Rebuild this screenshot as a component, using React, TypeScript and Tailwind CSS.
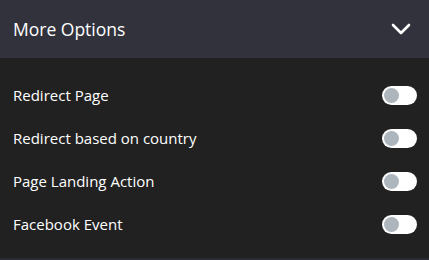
const options = [
  "Redirect Page",
  "Redirect based on country",
  "Page Landing Action",
  "Facebook Event",
];

function Toggle() {
  return (
    <div className="flex h-[19px] w-[35px] items-center rounded-full bg-white px-[2px]">
      <div className="h-[15px] w-[15px] rounded-full bg-[#adb5bd]" />
    </div>
  );
}

export default function App() {
  return (
    <div
      className="flex h-[260px] w-[429px] flex-col bg-[#212121] text-white"
      style={{ fontFamily: '"Open Sans", sans-serif' }}
    >
      <div className="flex h-[58px] shrink-0 items-center justify-between bg-[#31323b] pl-[13px] pr-[18px]">
        <h2 className="text-[17.5px]">More Options</h2>
        <svg width="20" height="12" viewBox="0 0 20 12" fill="none">
          <path
            d="M2 2 L10 10 L18 2"
            stroke="white"
            strokeWidth="2.6"
            strokeLinecap="round"
            strokeLinejoin="round"
          />
        </svg>
      </div>

      <div className="flex flex-1 flex-col pt-[16px]">
        {options.map((label) => (
          <div
            key={label}
            className="flex h-[43px] items-center justify-between pl-[13px] pr-[12px]"
          >
            <span className="text-[15px]">{label}</span>
            <Toggle />
          </div>
        ))}
      </div>
      <div className="h-[2px] bg-[#2b2c33]" />
    </div>
  );
}
